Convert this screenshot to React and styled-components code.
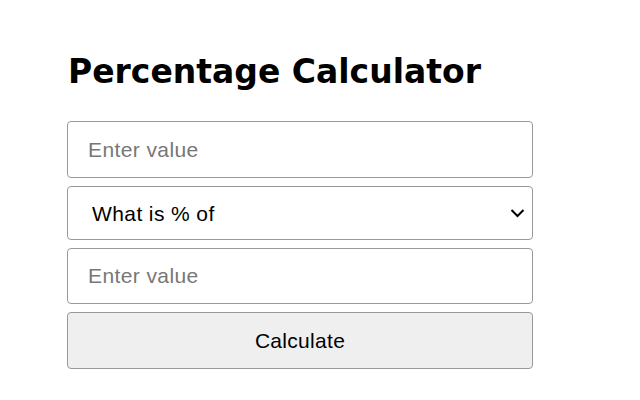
import React, { useState } from 'react';
import styled, { createGlobalStyle } from 'styled-components';

const GlobalStyle = createGlobalStyle`
  body {
    margin: 0;
    background: #ffffff;
    font-family: 'Liberation Sans', Arial, sans-serif;
  }
`;

const Page = styled.div`
  padding: 48px 0 0 67px;
`;

const Form = styled.div`
  width: 466px;
  display: flex;
  flex-direction: column;
  gap: 8px;
`;

const Title = styled.h1`
  margin: 0 0 25px 1px;
  font-family: 'DejaVu Sans', 'Open Sans', sans-serif;
  font-weight: 700;
  font-size: 33px;
  line-height: 48px;
  color: #000;
`;

const Field = styled.input`
  box-sizing: border-box;
  width: 100%;
  height: ${(p) => p.$h || 57}px;
  padding: 0 20px;
  border: 1px solid #999;
  border-radius: 4px;
  font-family: 'Liberation Sans', Arial, sans-serif;
  font-size: 21px;
  letter-spacing: 0.4px;
  color: #000;
  outline: none;

  &::placeholder {
    color: #777;
  }
`;

const SelectWrap = styled.div`
  position: relative;
`;

const Select = styled.select`
  box-sizing: border-box;
  width: 100%;
  height: 54px;
  padding: 0 24px;
  border: 1px solid #999;
  border-radius: 4px;
  background: #fff;
  appearance: none;
  font-family: 'Liberation Sans', Arial, sans-serif;
  font-size: 21px;
  letter-spacing: 0.4px;
  color: #000;
  outline: none;
`;

const Chevron = styled.svg`
  position: absolute;
  right: 8px;
  top: 50%;
  margin-top: -5px;
  width: 15px;
  height: 10px;
  pointer-events: none;
`;

const Button = styled.button`
  box-sizing: border-box;
  width: 100%;
  height: 57px;
  border: 1px solid #999;
  border-radius: 4px;
  background: #efefef;
  font-family: 'Liberation Sans', Arial, sans-serif;
  font-size: 21px;
  letter-spacing: 0.3px;
  color: #000;
`;

export default function App() {
  const [mode, setMode] = useState('what');

  return (
    <Page>
      <GlobalStyle />
      <Title>Percentage Calculator</Title>
      <Form>
        <Field type="text" placeholder="Enter value" />
        <SelectWrap>
          <Select value={mode} onChange={(e) => setMode(e.target.value)}>
            <option value="what">What is % of</option>
            <option value="is">is what % of</option>
          </Select>
          <Chevron viewBox="0 0 15 10">
            <path d="M1.5 2 L7.5 8 L13.5 2" fill="none" stroke="#000" strokeWidth="2" />
          </Chevron>
        </SelectWrap>
        <Field type="text" $h={56} placeholder="Enter value" />
        <Button>Calculate</Button>
      </Form>
    </Page>
  );
}
